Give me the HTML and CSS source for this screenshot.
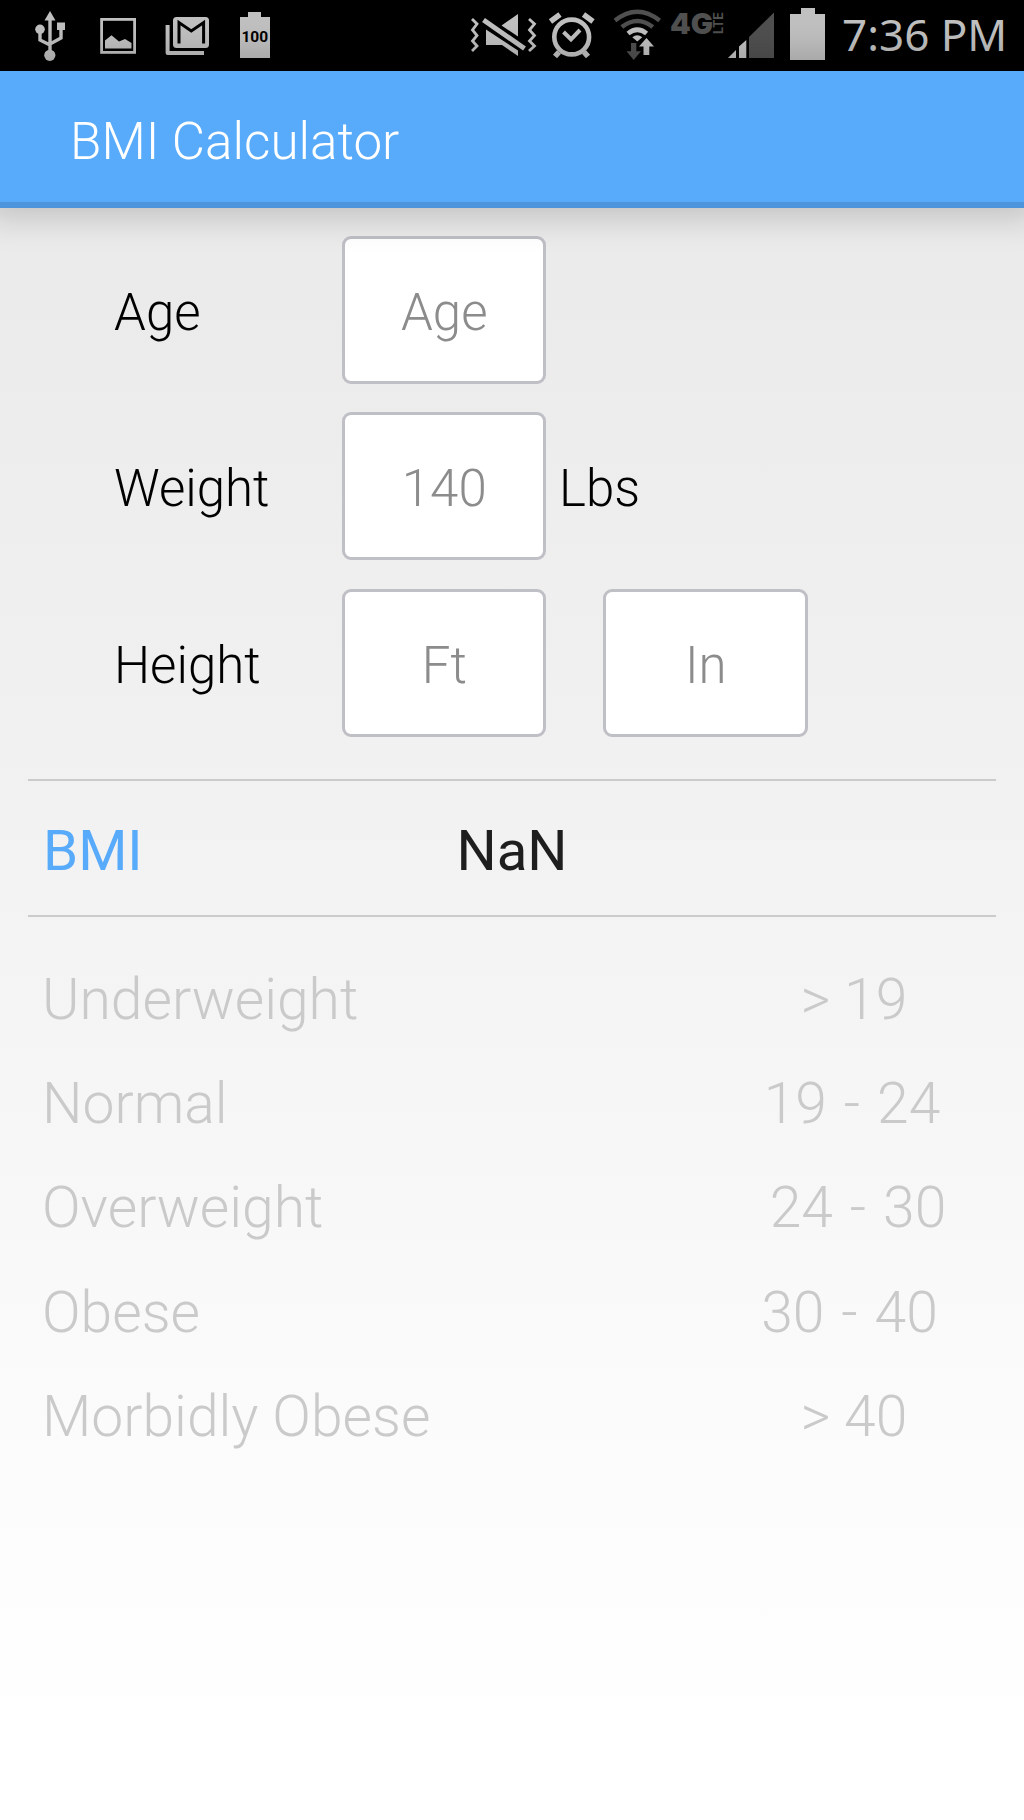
FILE: index.html
```
<!DOCTYPE html>
<html lang="en">
<head>
    <meta charset="UTF-8">
    <meta name="viewport" content="width=device-width, initial-scale=1.0">
    <title>BMI Calculator</title>
    <link rel="stylesheet" href="styles.css">
</head>
<body>

<div class="status-bar">
    <div class="status-icons">
        <!-- usb -->
        <svg width="65" height="71" viewBox="20 0 65 71">
            <path class="line" stroke-width="3.4" d="M50 16V54M40 29V40L50 45M61 28V38L50 44"/>
            <path d="M50 11L44.5 20.5H55.5ZM57 22.5H65V30H57Z"/>
            <circle cx="40" cy="29.3" r="4.8"/>
            <circle cx="49.8" cy="55.3" r="5.6"/>
        </svg>
        <!-- picture -->
        <svg width="65" height="71" viewBox="85 0 65 71">
            <rect class="line" stroke-width="2.8" x="101.6" y="19.4" width="33" height="33"/>
            <path d="M105 48.5V40.5L111.5 35.3L119 41.5L125 39L131.5 43V48.5Z"/>
        </svg>
        <!-- mail -->
        <svg width="75" height="71" viewBox="150 0 75 71">
            <path class="line" stroke-width="4" stroke-linejoin="round" d="M167.6 25V53H204"/>
            <rect x="173" y="17" width="36" height="31" rx="3.5"/>
            <path class="cut" stroke-width="3" d="M179 43.5V22.5L191.3 31L203.6 22.5V43.5"/>
        </svg>
        <!-- battery level -->
        <svg width="65" height="71" viewBox="225 0 65 71">
            <path d="M240 17H248V12H261V17H270V58H240Z"/>
            <text class="level" x="254.8" y="42" text-anchor="middle">100</text>
        </svg>
    </div>

    <div class="status-icons">
        <!-- sound off -->
        <svg width="81" height="71" viewBox="462 0 81 71">
            <path class="line" stroke-width="2.8" d="M472 19L477 24L472.5 30L477 35.5L472.5 41L477 46L472 51M529 19L534.5 24L529.5 30L534.5 35.5L529.5 41L534.5 46L529 51"/>
            <path class="line" stroke-width="5" d="M483.5 20L524.5 48.5"/>
            <path d="M501.5 25.5L518 14V36.5ZM486 29.5V45H502L518 56V50.5Z"/>
        </svg>
        <!-- alarm -->
        <svg width="63" height="71" viewBox="543 0 63 71">
            <circle class="line" stroke-width="4.6" cx="571.7" cy="37" r="17.4"/>
            <path class="line" stroke-width="4" d="M563.5 32L571 39.3L580 30"/>
            <path class="line" stroke-width="5.5" d="M550.5 21.5L560 14.5M583.5 14.5L593 21.5M559 52L555 56.5M584 52L588 56.5"/>
        </svg>
        <!-- wifi -->
        <svg width="60" height="71" viewBox="606 0 60 71">
            <path class="line dim" stroke-width="4.6" d="M615 20.5Q637.3 3 659.6 20.5M621.8 27Q637.3 15 652.8 27"/>
            <path class="line" stroke-width="4.8" d="M628 33.5Q637.3 26 646.6 33.5"/>
            <path d="M632.3 37.3Q637.3 33.3 642.3 37.3L637.3 41.5Z"/>
            <path class="dim" d="M631 43H636.3V51.3H641L633.7 60L626.5 51.3H631Z"/>
            <path d="M646.5 38L654 46.5H649.3V55H643.5V46.5H639Z"/>
        </svg>
        <!-- network -->
        <svg width="60" height="71" viewBox="666 0 60 71">
            <text class="network dim" x="670" y="33.5" textLength="43" lengthAdjust="spacingAndGlyphs">4G</text>
            <text class="lte dim" transform="translate(722.7 34) rotate(-90)" textLength="22" lengthAdjust="spacingAndGlyphs">LTE</text>
        </svg>
        <!-- signal -->
        <svg width="54" height="71" viewBox="726 0 54 71">
            <path d="M728 58L736 50V58ZM739 58V46.5L746.3 40V58Z"/>
            <path class="dim" d="M749 58V37L774 12.5V58Z"/>
        </svg>
        <!-- battery -->
        <svg width="60" height="71" viewBox="780 0 60 71">
            <path d="M790 14H801V8H815V14H825V60H790Z"/>
        </svg>
        <span class="clock">7:36 PM</span>
    </div>
</div>

<header class="app-header">
    <h1 class="app-name">BMI Calculator</h1>
</header>

<form class="bmi-form">
    <div class="row">
        <label class="label" for="age">Age</label>
        <input class="field" id="age" type="text" placeholder="Age">
    </div>
    <div class="row">
        <label class="label" for="weight">Weight</label>
        <input class="field" id="weight" type="text" placeholder="140">
        <span class="unit">Lbs</span>
    </div>
    <div class="row">
        <label class="label" for="feet">Height</label>
        <input class="field" id="feet" type="text" placeholder="Ft">
        <input class="field inches" id="inches" type="text" placeholder="In">
    </div>
</form>

<div class="result">
    <span class="result-name">BMI</span>
    <span class="result-value" id="bmi">NaN</span>
</div>

<ul class="ranges">
    <li><span>Underweight</span><span class="range">&gt; 19</span></li>
    <li><span>Normal</span><span class="range between">19 - 24</span></li>
    <li><span>Overweight</span><span class="range between shift-right">24 - 30</span></li>
    <li><span>Obese</span><span class="range between shift-left">30 - 40</span></li>
    <li><span>Morbidly Obese</span><span class="range">&gt; 40</span></li>
</ul>

<script>
    const age = document.getElementById('age');
    const weight = document.getElementById('weight');
    const feet = document.getElementById('feet');
    const inches = document.getElementById('inches');
    const bmi = document.getElementById('bmi');

    function updateBmi() {
        const height = parseFloat(feet.value) * 12 + (parseFloat(inches.value) || 0);
        const value = parseFloat(weight.value) * 703 / (height * height);
        bmi.textContent = isNaN(value) ? 'NaN' : value.toFixed(1);
    }

    [age, weight, feet, inches].forEach(input => input.addEventListener('input', updateBmi));
</script>

</body>
</html>
```
FILE: styles.css
```
* {
    box-sizing: border-box;
}

body {
    margin: 0;
    min-height: 1820px;
    font-family: Roboto, sans-serif;
    font-weight: 300;
    background: linear-gradient(#ebebeb 300px, #f3f3f3 900px, #fbfbfb 1420px, #ffffff 1760px);
}

.status-bar {
    display: flex;
    justify-content: space-between;
    height: 71px;
    padding: 0 18px 0 20px;
    background: #000;
}

.status-icons {
    display: flex;
}

.status-icons svg {
    display: block;
    flex: none;
    fill: #c0c0c0;
}

.status-icons .line {
    fill: none;
    stroke: #c0c0c0;
}

.status-icons .cut {
    fill: none;
    stroke: #000;
}

.status-icons .dim {
    fill: #505050;
}

.status-icons .line.dim {
    fill: none;
    stroke: #505050;
}

.level {
    font: 700 15.5px Roboto, sans-serif;
    fill: #000;
}

.network {
    font: 900 29px Inter, sans-serif;
}

.lte {
    font: 700 12.5px Inter, sans-serif;
}

.clock {
    width: 166px;
    padding-left: 2px;
    font: 400 44px/69px "Noto Sans", sans-serif;
    white-space: nowrap;
    color: #c0c0c0;
}

.app-header {
    position: relative;
    height: 137px;
    padding-left: 70px;
    background: #58aafa;
    border-bottom: 6px solid #4c95dc;
    box-shadow: 0 -4px 32px 14px rgba(0, 0, 0, 0.18);
}

.app-name {
    margin: 0;
    font-size: 51.2px;
    font-weight: 300;
    line-height: 142px;
    color: #fff;
}

.bmi-form {
    padding: 28px 0 13.6px 114px;
}

.row {
    display: flex;
    align-items: center;
    height: 148px;
    margin-bottom: 28.4px;
    font-size: 51px;
}

.label {
    width: 227.5px;
    padding-top: 5px;
}

.field {
    width: 204.5px;
    height: 148px;
    padding: 5px 0 0 1px;
    border: 3px solid #bfbfc6;
    border-radius: 9px;
    background: #fff;
    font: inherit;
    text-align: center;
}

.field::placeholder {
    color: #8c8c8c;
}

.inches {
    margin-left: 57px;
}

.unit {
    padding: 5px 0 0 13px;
}

.result {
    display: grid;
    grid-template-columns: 1fr auto 1fr;
    height: 138px;
    margin: 0 28px;
    padding: 0 15px;
    border-top: 2px solid #cbcbcb;
    border-bottom: 2px solid #cbcbcb;
    font-size: 56.4px;
    font-weight: 400;
    line-height: 140px;
}

.result-name {
    color: #58aafa;
}

.result-value {
    color: #1e1e1e;
}

.ranges {
    margin: 31px 0 0;
    padding: 0 42px;
    list-style: none;
    font-size: 57px;
    line-height: 104.3px;
    color: #cacaca;
}

.ranges li {
    display: flex;
    justify-content: space-between;
}

.range {
    width: 256px;
    text-align: center;
}

.between {
    padding-right: 4px;
    word-spacing: 3px;
}

.shift-right {
    padding: 0 0 0 8px;
}

.shift-left {
    padding-right: 9px;
}
```
